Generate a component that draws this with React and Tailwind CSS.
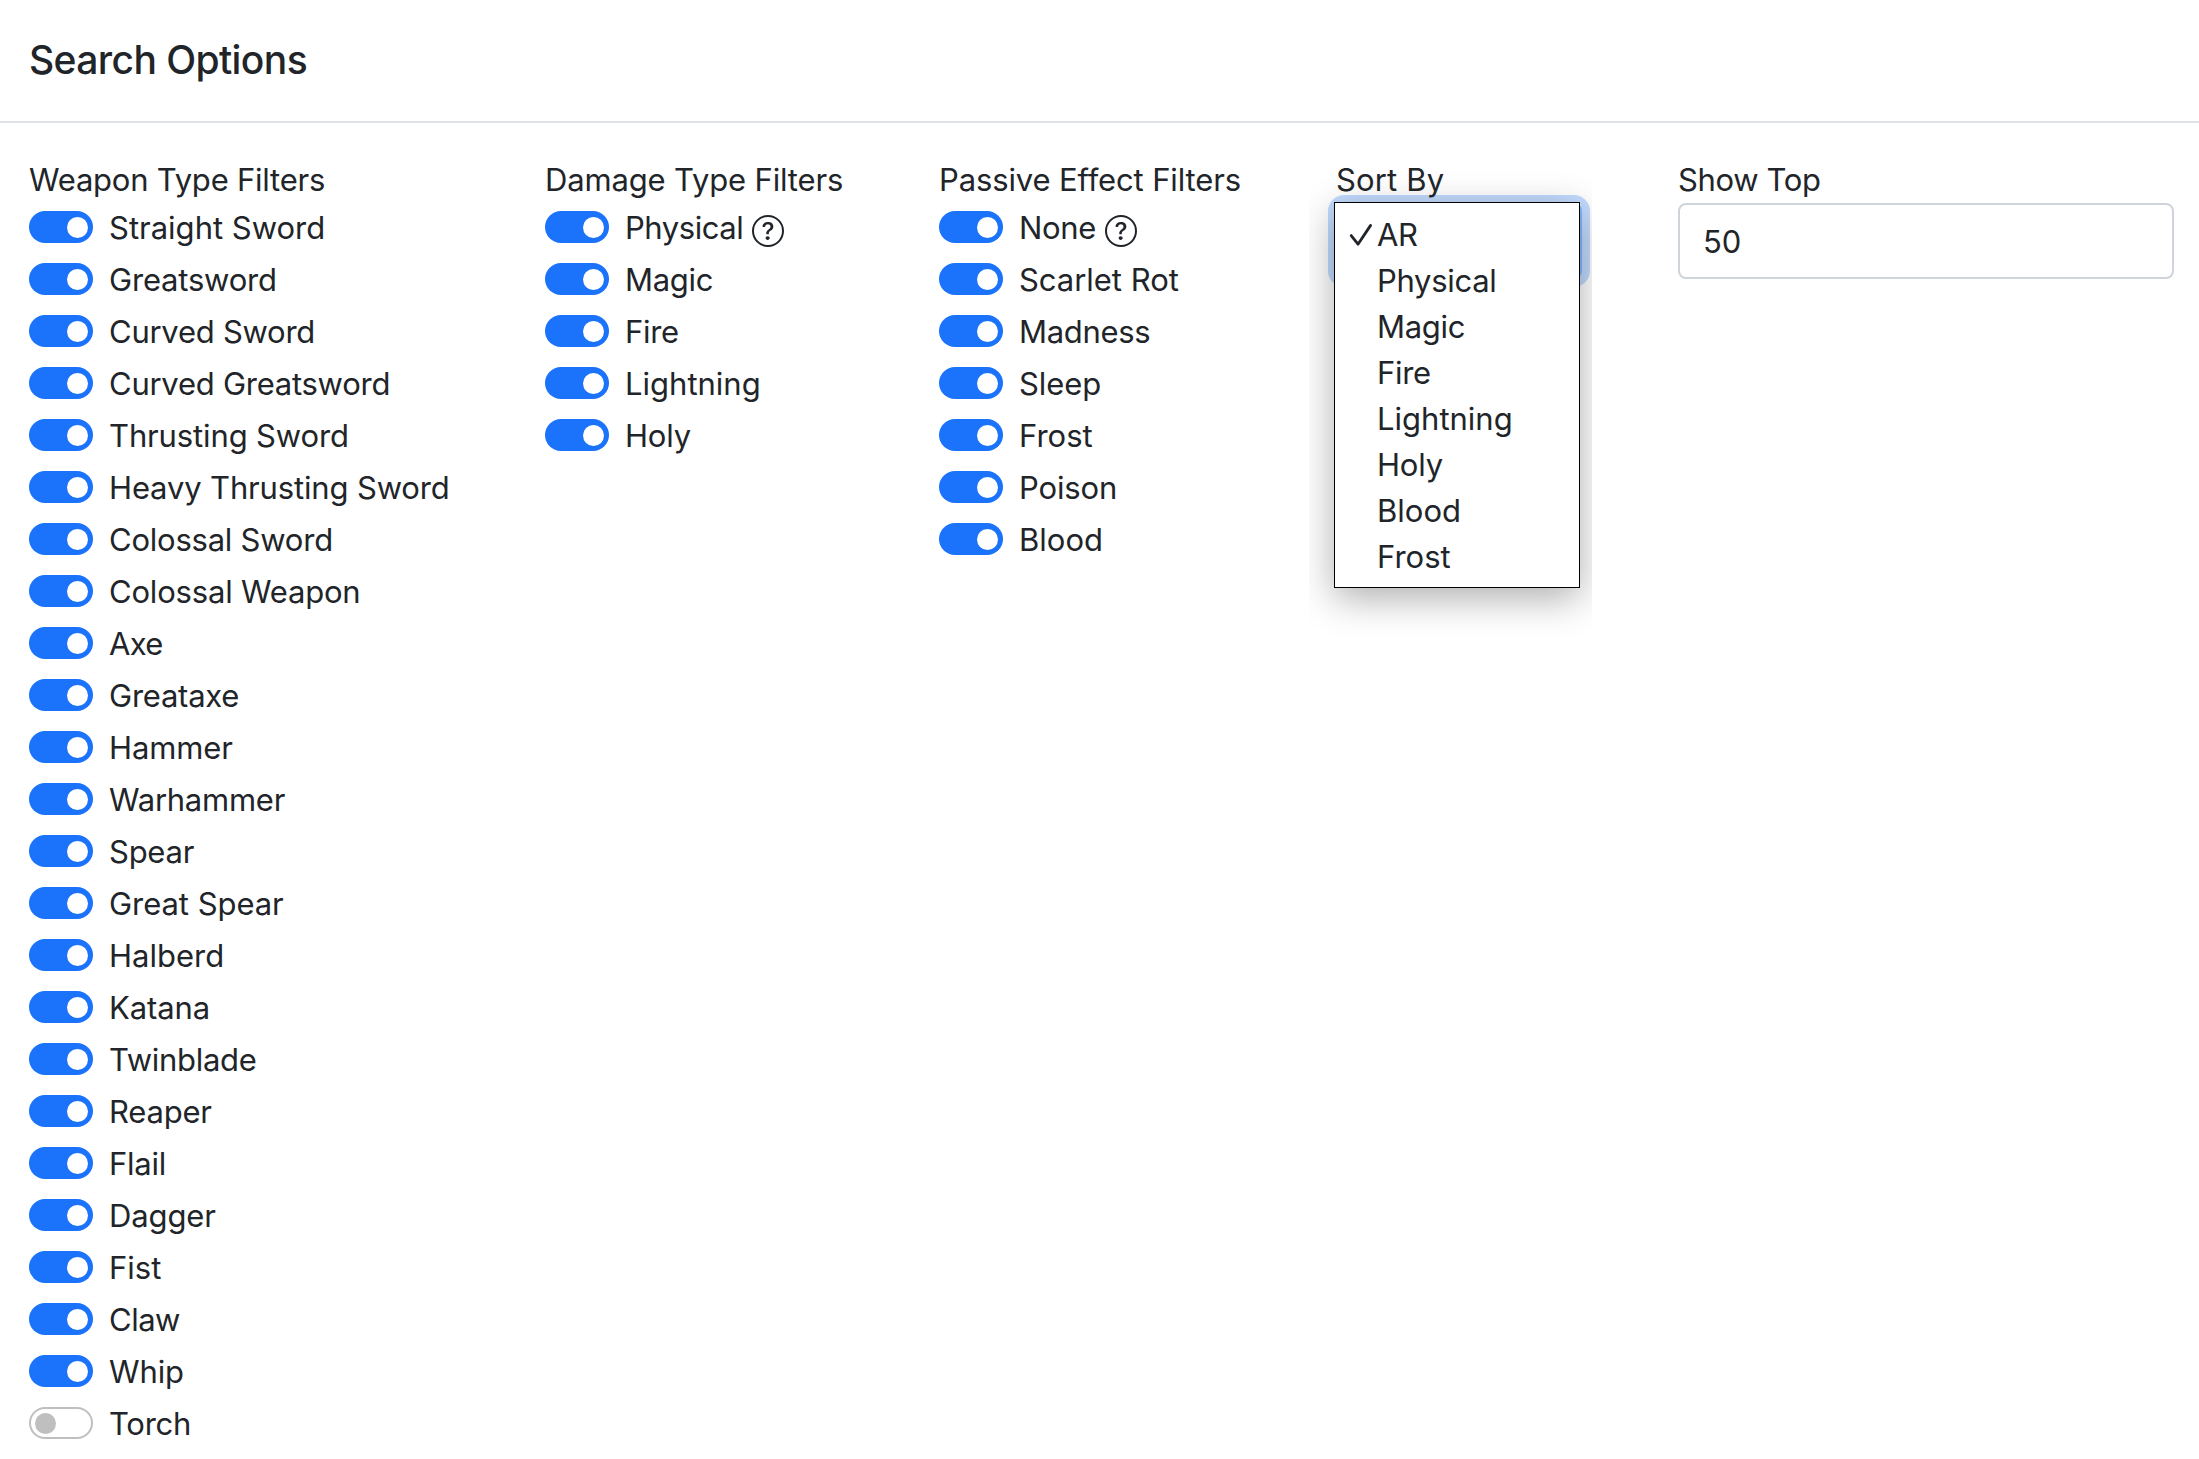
import React from "react";
import { BsQuestionCircle } from "react-icons/bs";

// Each entry: [label, letter spacing in px, switched on, has help icon]
const weaponTypes = [
  ["Straight Sword", 0],
  ["Greatsword", -0.2],
  ["Curved Sword", -0.26],
  ["Curved Greatsword", -0.26],
  ["Thrusting Sword", -0.13],
  ["Heavy Thrusting Sword", -0.15],
  ["Colossal Sword", -0.23],
  ["Colossal Weapon", -0.19],
  ["Axe", -0.7],
  ["Greataxe", -0.24],
  ["Hammer", -0.1],
  ["Warhammer", -0.25],
  ["Spear", -0.25],
  ["Great Spear", -0.05],
  ["Halberd", 0],
  ["Katana", -0.1],
  ["Twinblade", -0.3],
  ["Reaper", -0.2],
  ["Flail", -0.25],
  ["Dagger", -0.12],
  ["Fist", 0],
  ["Claw", -0.5],
  ["Whip", -0.1],
  ["Torch", -0.25, false],
];

const damageTypes = [
  ["Physical", -0.45, true, true],
  ["Magic", -0.3],
  ["Fire", -0.33],
  ["Lightning", 0],
  ["Holy", -0.2],
];

const passiveEffects = [
  ["None", -0.3, true, true],
  ["Scarlet Rot", -0.03],
  ["Madness", -0.3],
  ["Sleep", -0.1],
  ["Frost", 0],
  ["Poison", -0.14],
  ["Blood", 0],
];

const sortOptions = [
  ["AR", -0.3],
  ["Physical", -0.3],
  ["Magic", -0.3],
  ["Fire", -0.33],
  ["Lightning", 0],
  ["Holy", -0.2],
  ["Blood", 0],
  ["Frost", 0],
];

function Switch({ on }) {
  return on ? (
    <span className="flex h-8 w-16 shrink-0 items-center justify-end rounded-full bg-[#1b72fb] pr-[5.5px]">
      <span className="size-[21px] rounded-full bg-white" />
    </span>
  ) : (
    <span className="flex h-8 w-16 shrink-0 items-center rounded-full border-2 border-[#bfbfbf] bg-white pl-[3.5px]">
      <span className="size-[21px] rounded-full bg-[#bfbfbf]" />
    </span>
  );
}

function FilterGroup({ title, tracking, items, className }) {
  return (
    <section className={className}>
      <h2 className="h-12" style={{ letterSpacing: tracking }}>
        {title}
      </h2>
      <ul className="flex flex-col gap-1">
        {items.map(([label, spacing, on = true, help]) => (
          <li key={label} className="flex h-12 items-start">
            <span className="pt-1">
              <Switch on={on} />
            </span>
            <span className="pl-4" style={{ letterSpacing: spacing }}>
              {label}
            </span>
            {help && <BsQuestionCircle className="mt-2 ml-[8.5px] size-8" />}
          </li>
        ))}
      </ul>
    </section>
  );
}

function SortMenu() {
  return (
    <div className="absolute -top-[3px] -left-1 z-10 [clip-path:inset(-40px_-12px_-60px_-25px)]">
      <ul className="h-[386px] w-[246px] border border-black bg-white pt-[9px] shadow-[0_10px_36px_rgba(0,0,0,0.32)]">
        {sortOptions.map(([label, spacing], i) => (
          <li key={label} className="flex h-[46px] items-center leading-[46px]">
            <span className="flex w-[42px] justify-end pr-[4px]">
              {i === 0 && (
                <svg viewBox="0 0 24 24" className="size-6" fill="none" stroke="currentColor" strokeWidth="2.8" strokeLinecap="round" strokeLinejoin="round">
                  <path d="M2.2 12.6 9 21.2 21.6 2.4" />
                </svg>
              )}
            </span>
            <span style={{ letterSpacing: spacing }}>{label}</span>
          </li>
        ))}
      </ul>
    </div>
  );
}

export default function App() {
  return (
    <div className="h-[1459px] w-[2199px] overflow-hidden bg-white font-['Inter',sans-serif] text-[31px] leading-[42px] text-[#212529]">
      <header className="flex h-[123px] items-center border-b-2 border-[#dee2e6] pb-0.5 pl-[29px]">
        <h1 className="text-[39px] leading-[48px] font-medium tracking-[-0.6px]">Search Options</h1>
      </header>
      <main className="flex pt-9 pl-[29px]">
        <FilterGroup title="Weapon Type Filters" tracking={-0.22} items={weaponTypes} className="w-[516px]" />
        <FilterGroup title="Damage Type Filters" tracking={-0.16} items={damageTypes} className="w-[394px]" />
        <FilterGroup title="Passive Effect Filters" tracking={-0.13} items={passiveEffects} className="w-[397px]" />
        <section className="w-[342px]">
          <h2 className="relative z-20 h-11 tracking-[0.15px]">Sort By</h2>
          <div className="relative h-[76px] w-[246px] rounded-lg border-2 border-[#86b7fe] bg-white shadow-[0_0_0_8px_#c2dbfe]">
            <SortMenu />
          </div>
        </section>
        <section className="w-[496px]">
          <h2 className="h-11" style={{ letterSpacing: -0.35 }}>
            Show Top
          </h2>
          <div className="h-[76px] rounded-lg border-2 border-[#ced4da] bg-white px-[23px] leading-[74px]">50</div>
        </section>
      </main>
    </div>
  );
}
